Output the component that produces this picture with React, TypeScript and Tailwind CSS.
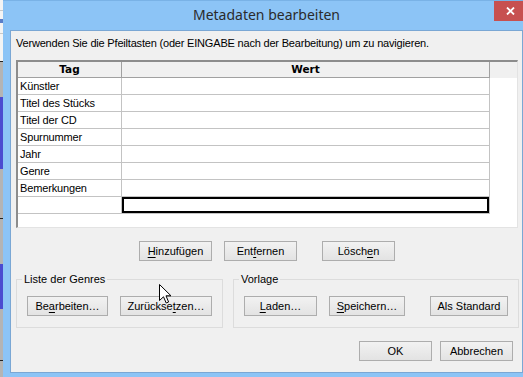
import React from "react";

const Btn = ({ children, w }: { children: React.ReactNode; w: string }) => (
  <div
    className={`${w} h-[20px] shrink-0 border border-[#adadad] bg-gradient-to-b from-[#f2f2f2] to-[#e3e3e3] flex items-center justify-center text-[11px] leading-[13px] text-black`}
  >
    {children}
  </div>
);

const U = ({ children }: { children: React.ReactNode }) => (
  <span className="underline underline-offset-[2px] decoration-[1px]">{children}</span>
);

const rows = ["Künstler", "Titel des Stücks", "Titel der CD", "Spurnummer", "Jahr", "Genre", "Bemerkungen", ""];

function LeftStrip() {
  return (
    <div className="w-[3px] h-[377px] shrink-0 flex flex-col">
      <div className="h-[10px] bg-[#f4f4f4]" />
      <div className="h-[1px] bg-[#c8c8c8]" />
      <div className="h-[8px] bg-[#f4f4f4]" />
      <div className="h-[4px] bg-[#5a7ec8]" />
      <div className="h-[10px] bg-[#f4f4f4]" />
      <div className="h-[1px] bg-[#c8c8c8]" />
      <div className="h-[27px] bg-[#f4f4f4]" />
      <div className="h-[1px] bg-[#202020]" />
      <div className="h-[35px] bg-[#b4b4b4]" />
      <div className="h-[72px] bg-[#4b4bd0]" />
      <div className="h-[49px] bg-[#b4b4b4]" />
      <div className="h-[1px] bg-[#202020]" />
      <div className="h-[45px] bg-[#b4b4b4]" />
      <div className="h-[45px] bg-[#4b4bd0]" />
      <div className="h-[51px] bg-[#b4b4b4]" />
      <div className="h-[1px] bg-[#202020]" />
      <div className="flex-1 bg-[#b4b4b4]" />
    </div>
  );
}

export default function App() {
  return (
    <div
      className="w-[523px] h-[377px] overflow-hidden flex bg-[#b4b4b4] relative"
      style={{ fontFamily: '"Liberation Sans", Arial, sans-serif' }}
    >
      <LeftStrip />
      <div className="w-[527px] h-[380px] shrink-0 bg-[#8cc4f6] flex flex-col">
        {/* Title bar */}
        <div className="h-[30px] shrink-0 relative flex items-center justify-center border-t border-[#79b2e6]">
          <span
            className="text-[14px] text-[#2b2b2b] leading-[18px] -mt-[1px]"
            style={{ fontFamily: '"Noto Sans", sans-serif' }}
          >
            Metadaten bearbeiten
          </span>
          <div className="absolute right-[4px] top-0 w-[32px] h-[20px] bg-[#c75050] flex items-center justify-center">
            <svg width="9" height="8" viewBox="0 0 9 8">
              <path d="M1 0.5 L8 7.5 M8 0.5 L1 7.5" stroke="white" strokeWidth="1.8" />
            </svg>
          </div>
        </div>

        {/* Client area */}
        <div className="mx-[7px] h-[343px] shrink-0 border border-[#7aa7d4] bg-[#f0f0f0] flex flex-col">
          <div className="mt-[6px] pl-[5px] h-[13px] text-[11px] leading-[13px] tracking-[-0.19px] text-black whitespace-nowrap">
            Verwenden Sie die Pfeiltasten (oder EINGABE nach der Bearbeitung) um zu navigieren.
          </div>

          {/* Grid */}
          <div className="mt-[10px] ml-[5px] w-[502px] h-[168px] shrink-0 border-t-2 border-l-2 border-t-[#8c8c8c] border-l-[#8c8c8c] border-r border-b border-r-[#e3e3e3] border-b-[#e3e3e3] bg-white flex flex-col">
            <div className="h-[16px] shrink-0 flex bg-[#f0f0f0]">
              <div
                className="w-[104px] h-[16px] border-r border-b border-[#a0a0a0] flex items-center justify-center text-[10.5px] font-bold text-black"
                style={{ fontFamily: '"DejaVu Sans", sans-serif' }}
              >
                Tag
              </div>
              <div
                className="w-[368px] h-[16px] border-r border-b border-[#a0a0a0] flex items-center justify-center text-[10.5px] font-bold text-black"
                style={{ fontFamily: '"DejaVu Sans", sans-serif' }}
              >
                Wert
              </div>
              <div className="flex-1" />
            </div>
            {rows.map((r, i) => (
              <div key={i} className="h-[17px] shrink-0 flex">
                <div className="w-[104px] h-[17px] border-r border-b border-[#c3c3c3] pl-[2px] flex items-center text-[11px] leading-[16px] tracking-[-0.15px] text-black">
                  {r}
                </div>
                <div className="w-[368px] h-[17px] border-r border-b border-[#c3c3c3] flex">
                  {i === rows.length - 1 && <div className="flex-1 border-2 border-black" />}
                </div>
              </div>
            ))}
          </div>

          {/* Buttons row 1 */}
          <div className="mt-[13px] pl-[128px] flex">
            <Btn w="w-[73px]">
              <U>H</U>inzufügen
            </Btn>
            <div className="w-[12px]" />
            <Btn w="w-[73px]">
              Ent<U>f</U>ernen
            </Btn>
            <div className="w-[25px]" />
            <Btn w="w-[73px]">
              Lösch<U>e</U>n
            </Btn>
          </div>

          {/* Groups */}
          <div className="mt-[18px] pl-[5px] flex">
            <div className="relative w-[207px] h-[49px] border border-[#dcdcdc] flex pl-[10px] pt-[16px]">
              <span className="absolute left-[5px] -top-[7px] px-[2px] bg-[#f0f0f0] text-[11px] leading-[13px] text-black">
                Liste der Genres
              </span>
              <Btn w="w-[81px]">
                Be<U>a</U>rbeiten…
              </Btn>
              <div className="w-[12px]" />
              <Btn w="w-[92px]">
                Zurückse<U>t</U>zen…
              </Btn>
            </div>
            <div className="w-[10px]" />
            <div className="relative w-[286px] h-[49px] border border-[#dcdcdc] flex pl-[10px] pt-[16px]">
              <span className="absolute left-[5px] -top-[7px] px-[2px] bg-[#f0f0f0] text-[11px] leading-[13px] text-black">
                Vorlage
              </span>
              <Btn w="w-[73px]">
                <U>L</U>aden…
              </Btn>
              <div className="w-[12px]" />
              <Btn w="w-[76px]">
                <U>S</U>peichern…
              </Btn>
              <div className="w-[25px]" />
              <Btn w="w-[78px]">Als Standard</Btn>
            </div>
          </div>

          {/* Buttons row 3 */}
          <div className="mt-[13px] pl-[348px] flex">
            <Btn w="w-[73px]">OK</Btn>
            <div className="w-[8px]" />
            <Btn w="w-[73px]">Abbrechen</Btn>
          </div>
        </div>
      </div>

      {/* Mouse cursor */}
      <svg className="absolute left-[159px] top-[284px]" width="13" height="20" viewBox="0 0 13 20">
        <path
          d="M0.5 0.5 L0.5 16.5 L4.5 12.8 L7.2 19 L9.6 18 L7 11.8 L12 11.8 Z"
          fill="white"
          stroke="black"
          strokeWidth="1"
          strokeLinejoin="miter"
        />
      </svg>
    </div>
  );
}
